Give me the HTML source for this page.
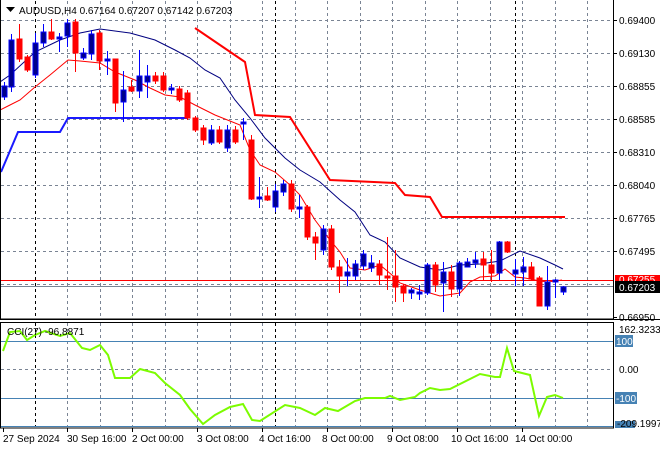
<!DOCTYPE html>
<html><head><meta charset="utf-8"><style>
html,body{margin:0;padding:0;background:#fff;width:660px;height:450px;overflow:hidden}
svg{display:block}
text{font-family:"Liberation Sans",sans-serif;font-size:10px}
</style></head><body>
<svg width="660" height="450" xmlns="http://www.w3.org/2000/svg">
<rect width="660" height="450" fill="#fff"/>
<!-- grid main -->
<g stroke="#7a8494" stroke-width="1" stroke-dasharray="3,3" fill="none">
<path d="M1 20.5H613M1 53.5H613M1 86.5H613M1 119.5H613M1 152.5H613M1 185.5H613M1 218.5H613M1 251.5H613M1 284.5H613"/>
<path d="M67.5 1V318M100.5 1V318M132.5 1V318M165.5 1V318M197.5 1V318M230.5 1V318M262.5 1V318M295.5 1V318M327.5 1V318M360.5 1V318M392.5 1V318M425.5 1V318M457.5 1V318M490.5 1V318M522.5 1V318M555.5 1V318M587.5 1V318"/>
<path d="M1 369.5H613M67.5 323V427M100.5 323V427M132.5 323V427M165.5 323V427M197.5 323V427M230.5 323V427M262.5 323V427M295.5 323V427M327.5 323V427M360.5 323V427M392.5 323V427M425.5 323V427M457.5 323V427M490.5 323V427M555.5 323V427M587.5 323V427"/>
</g>
<g stroke="#000" stroke-dasharray="3,3"><path d="M35.5 1V318M275.5 1V318M515.5 1V318M35.5 323V427M275.5 323V427M515.5 323V427"/></g>
<!-- step lines -->
<polyline fill="none" stroke="#1a1aff" stroke-width="2" points="1,172 18,132 60,132 68,118 187,118"/>
<polyline fill="none" stroke="#f00" stroke-width="2" points="195,28 245,62 255,115 290,117 330,180 395,183 405,195 430,197 442,217 565,217"/>
<!-- price lines -->
<line x1="1" y1="280.5" x2="613" y2="280.5" stroke="#f00"/>
<line x1="1" y1="286.5" x2="613" y2="286.5" stroke="#7a8494"/>
<!-- MAs -->
<polyline fill="none" stroke="#000080" points="0,82 10,75 35,52 60,40 80,33 100,29 130,33 155,40 175,50 190,58 205,70 220,78 235,100 250,118 265,138 285,158 300,170 320,182 340,200 355,212 370,235 385,242 400,258 420,267 440,270 460,265 480,264 500,261 520,251 540,258 555,265 563,269"/>
<polyline fill="none" stroke="#f00" points="0,110 10,105 20,100 35,87 50,75 68,60 80,61 100,63 115,72 135,80 150,88 165,95 180,97 195,105 215,115 240,125 250,150 260,165 275,172 290,185 300,195 315,220 330,240 340,252 350,268 365,270 380,265 392,275 400,283 420,290 440,296 460,293 470,282 480,277 495,276 505,269 515,277 525,278 540,281 548,282 562,280"/>
<!-- candles -->
<g stroke-width="1">
<g stroke="#0000ff" fill="#00008b">
<path d="M4.5 82V100M11.5 34V92M35.5 33V78M43.5 24V47M59.5 33V52M67.5 19V47M83.5 48V60M91.5 30V60M107.5 51V75M123.5 71V122M139.5 50V98M147.5 65V98M171.5 84V94M211.5 125V145M227.5 125V152M243.5 118V140M259.5 177V208M275.5 184V212M283.5 180V196M299.5 195V218M323.5 225V255M347.5 258V286M355.5 260V280M363.5 250V270M371.5 255V272M411.5 288V299M419.5 285V300M427.5 263V295M443.5 262V312M459.5 261V296M467.5 258V267M475.5 252V268M499.5 241V280M515.5 259V286M523.5 257V286M547.5 266V310M555.5 279V298M563.5 286V295"/>
<rect x="2" y="86" width="5" height="11"/><rect x="9" y="40" width="5" height="47"/><rect x="33" y="43" width="5" height="32"/><rect x="41" y="32" width="5" height="11"/><rect x="57" y="37" width="5" height="2"/><rect x="65" y="23" width="5" height="13"/><rect x="81" y="53" width="5" height="5"/><rect x="89" y="34" width="5" height="20"/><rect x="105" y="59" width="5" height="2"/><rect x="121" y="90" width="5" height="12"/><rect x="137" y="76" width="5" height="15"/><rect x="145" y="76" width="5" height="6"/><rect x="169" y="88" width="5" height="2"/><rect x="209" y="130" width="5" height="13"/><rect x="225" y="130" width="5" height="18"/><rect x="241" y="122" width="5" height="2"/><rect x="257" y="197" width="5" height="2"/><rect x="273" y="191" width="5" height="16"/><rect x="281" y="184" width="5" height="8"/><rect x="297" y="207" width="5" height="2"/><rect x="321" y="229" width="5" height="21"/><rect x="345" y="272" width="5" height="4"/><rect x="353" y="264" width="5" height="12"/><rect x="361" y="254" width="5" height="12"/><rect x="369" y="263" width="5" height="5"/><rect x="409" y="290" width="5" height="3"/><rect x="417" y="292" width="5" height="2"/><rect x="425" y="265" width="5" height="28"/><rect x="441" y="272" width="5" height="11"/><rect x="457" y="263" width="5" height="26"/><rect x="465" y="262" width="5" height="5"/><rect x="473" y="260" width="5" height="3"/><rect x="497" y="242" width="5" height="31"/><rect x="513" y="270" width="5" height="4"/><rect x="521" y="267" width="5" height="5"/><rect x="545" y="282" width="5" height="24"/><rect x="553" y="280" width="5" height="2"/><rect x="561" y="287" width="5" height="5"/>
</g>
<g stroke="#f00" fill="#f00">
<path d="M19.5 24V62M27.5 55V72M51.5 19V40M75.5 19V72M99.5 30V70M115.5 59V112M131.5 80V92M155.5 72V84M163.5 72V92M179.5 86V102M187.5 90V120M195.5 116V132M203.5 125V145M219.5 126V144M235.5 126V144M251.5 135V200M267.5 187V201M291.5 180V212M307.5 205V240M315.5 232V260M331.5 225V270M339.5 260V293M379.5 260V285M387.5 237V290M395.5 250V302M403.5 284V302M435.5 262V292M451.5 265V297M483.5 252V280M491.5 250V282M507.5 241V253M531.5 262V281M539.5 276V306"/>
<rect x="17" y="39" width="5" height="20"/><rect x="25" y="57" width="5" height="13"/><rect x="49" y="32" width="5" height="7"/><rect x="73" y="22" width="5" height="31"/><rect x="97" y="33" width="5" height="28"/><rect x="113" y="59" width="5" height="44"/><rect x="129" y="87" width="5" height="4"/><rect x="153" y="76" width="5" height="5"/><rect x="161" y="76" width="5" height="14"/><rect x="177" y="89" width="5" height="11"/><rect x="185" y="93" width="5" height="25"/><rect x="193" y="118" width="5" height="12"/><rect x="201" y="128" width="5" height="12"/><rect x="217" y="130" width="5" height="12"/><rect x="233" y="130" width="5" height="12"/><rect x="249" y="140" width="5" height="59"/><rect x="265" y="196" width="5" height="4"/><rect x="289" y="184" width="5" height="25"/><rect x="305" y="207" width="5" height="30"/><rect x="313" y="237" width="5" height="6"/><rect x="329" y="229" width="5" height="38"/><rect x="337" y="267" width="5" height="9"/><rect x="377" y="264" width="5" height="11"/><rect x="385" y="276" width="5" height="2"/><rect x="393" y="276" width="5" height="11"/><rect x="401" y="286" width="5" height="7"/><rect x="433" y="265" width="5" height="20"/><rect x="449" y="272" width="5" height="17"/><rect x="481" y="259" width="5" height="6"/><rect x="489" y="265" width="5" height="8"/><rect x="505" y="242" width="5" height="10"/><rect x="529" y="267" width="5" height="12"/><rect x="537" y="278" width="5" height="28"/>
</g>
</g>
<!-- borders -->
<g stroke="#000" fill="none">
<path d="M0.5 0V319H613.5V0"/>
<path d="M0.5 322V428H613.5V322"/>
<path d="M0 319.5H660M0 322.5H614"/>
</g>
<!-- CCI levels -->
<g stroke="#4682b4"><path d="M1 341.5H613M1 398.5H613M1 426.5H613"/></g>
<polyline fill="none" stroke="#7cfc00" stroke-width="2" points="3,351 10,332 20,331 27,340 35,335 45,331 60,336 70,333 82,348 90,350 100,345 108,355 115,378 130,378 140,369 155,373 165,383 180,395 190,409 203,424 215,415 230,407 243,404 252,420 260,421 285,405 300,408 315,415 325,408 338,411 355,401 365,398 385,398 390,396 400,400 415,397 420,393 430,388 440,390 450,389 470,379 480,374 495,377 500,377 507,348 514,371 522,373 530,375 539,416 547,397 555,395 563,398"/>
<text x="7" y="335" fill="#000">CCI(27) -96,8871</text>
<!-- title -->
<path d="M6 7H15L10.5 12Z" fill="#000"/>
<text x="19" y="14" fill="#000">AUDUSD,H4  0.67164 0.67207 0.67142 0.67203</text>
<!-- axis -->
<g fill="#000">
<path d="M613 20.5h4M613 53.5h4M613 86.5h4M613 119.5h4M613 152.5h4M613 185.5h4M613 218.5h4M613 251.5h4M613 317.5h4" stroke="#000"/>
<text x="619" y="24">0.69400</text><text x="619" y="57">0.69130</text><text x="619" y="90">0.68855</text><text x="619" y="123">0.68585</text><text x="619" y="156">0.68310</text><text x="619" y="189">0.68040</text><text x="619" y="222">0.67765</text><text x="619" y="255">0.67495</text><text x="619" y="321">0.66950</text>
</g>
<rect x="615" y="275" width="45" height="7" fill="#f00"/>
<text x="619" y="283" fill="#fff">0.67255</text>
<rect x="615" y="281" width="45" height="12" fill="#000"/>
<text x="619" y="291" fill="#fff">0.67203</text>
<text x="619" y="333" fill="#000">162.3233</text>
<rect x="615" y="335" width="18" height="12" fill="#4682b4"/><text x="616" y="345" fill="#fff">100</text>
<text x="619" y="373" fill="#000">0.00</text>
<rect x="615" y="392" width="22" height="12" fill="#4682b4"/><text x="616" y="402" fill="#fff">-100</text>
<rect x="615" y="421" width="20" height="7" fill="#4682b4"/>
<text x="617" y="427" fill="#000">-209.1997</text>
<!-- time axis -->
<g stroke="#000"><path d="M3.5 428v4M67.5 428v4M132.5 428v4M197.5 428v4M262.5 428v4M327.5 428v4M392.5 428v4M457.5 428v4M522.5 428v4"/></g>
<g fill="#000">
<text x="3" y="442">27 Sep 2024</text><text x="67" y="442">30 Sep 16:00</text><text x="132" y="442">2 Oct 00:00</text><text x="197" y="442">3 Oct 08:00</text><text x="259" y="442">4 Oct 16:00</text><text x="322" y="442">8 Oct 00:00</text><text x="387" y="442">9 Oct 08:00</text><text x="451" y="442">10 Oct 16:00</text><text x="515" y="442">14 Oct 00:00</text>
</g>
</svg>
</body></html>
